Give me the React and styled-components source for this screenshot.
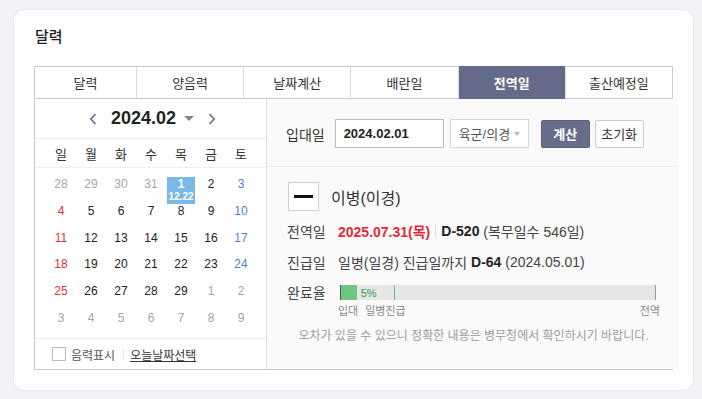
import styled, {createGlobalStyle} from 'styled-components'

const GlobalStyle = createGlobalStyle`
    body {
        margin: 0;
        background: #f2f3f7;
        font-family: "Liberation Sans", "Noto Sans CJK KR", sans-serif;
        color: #333;
    }
`;

const tabs = ["달력", "양음력", "날짜계산", "배란일", "전역일", "출산예정일"];
const weekdays = ["일", "월", "화", "수", "목", "금", "토"];

// kind: prev / next month are muted, sun / sat coloured
const buildDays = () => {
    const days = [];
    [28, 29, 30, 31].forEach(d => days.push({d, muted: true}));
    for (let d = 1; d <= 29; d++) days.push({d});
    for (let d = 1; d <= 9; d++) days.push({d, muted: true});
    return days.map((day, i) => ({...day, col: i % 7}));
};

export default function App() {
    const days = buildDays();
    const progress = 5;
    const promoteAt = 16.8;

    return (
        <Page>
            <GlobalStyle/>
            <Card>
                <Title>달력</Title>
                <TabBar>
                    {tabs.map(t => <Tab key={t} $active={t === "전역일"}>{t}</Tab>)}
                </TabBar>
                <Body>
                    <Calendar>
                        <MonthHeader>
                            <Arrow viewBox="0 0 8 12"><path d="M6.5 1 L1.8 6 L6.5 11"/></Arrow>
                            <MonthLabel>2024.02</MonthLabel>
                            <Caret/>
                            <Arrow viewBox="0 0 8 12"><path d="M1.5 1 L6.2 6 L1.5 11"/></Arrow>
                        </MonthHeader>
                        <WeekRow>
                            {weekdays.map(w => <WeekDay key={w}>{w}</WeekDay>)}
                        </WeekRow>
                        <DayGrid>
                            {days.map((day, i) => {
                                const selected = !day.muted && day.d === 1;
                                return (
                                    <DayCell key={i} $muted={day.muted} $col={day.col} $selected={selected}>
                                        <span>{day.d}</span>
                                        {selected && <Lunar>12.22</Lunar>}
                                    </DayCell>
                                );
                            })}
                        </DayGrid>
                        <CalFooter>
                            <CheckBox/>
                            <FootText>음력표시</FootText>
                            <FootSep/>
                            <TodayLink>오늘날짜선택</TodayLink>
                        </CalFooter>
                    </Calendar>

                    <Panel>
                        <FormRow>
                            <FieldLabel>입대일</FieldLabel>
                            <DateInput value="2024.02.01" readOnly/>
                            <SelectBox>육군/의경<SmallCaret/></SelectBox>
                            <CalcButton>계산</CalcButton>
                            <ResetButton>초기화</ResetButton>
                        </FormRow>
                        <Info>
                            <RankRow>
                                <Insignia><i/></Insignia>
                                <RankName>이병(이경)</RankName>
                            </RankRow>
                            <InfoRow>
                                <RowLabel>전역일</RowLabel>
                                <RedDate>2025.07.31(목)</RedDate>
                                <Pipe/>
                                <b>D-520</b>&nbsp;(복무일수 546일)
                            </InfoRow>
                            <InfoRow>
                                <RowLabel>진급일</RowLabel>
                                일병(일경) 진급일까지&nbsp;<b>D-64</b>&nbsp;(2024.05.01)
                            </InfoRow>
                            <ProgressRow>
                                <RowLabel>완료율</RowLabel>
                                <ProgressWrap>
                                    <Bar>
                                        <Fill style={{width: `${progress}%`}}/>
                                        <Percent>{progress}%</Percent>
                                        <Marker style={{left: `${promoteAt}%`}}/>
                                    </Bar>
                                    <Rail>
                                        <span>입대</span>
                                        <span>일병진급</span>
                                        <RailEnd>전역</RailEnd>
                                    </Rail>
                                </ProgressWrap>
                            </ProgressRow>
                            <Note>오차가 있을 수 있으니 정확한 내용은 병무청에서 확인하시기 바랍니다.</Note>
                        </Info>
                    </Panel>
                </Body>
            </Card>
        </Page>
    );
}

const Page = styled.div`
    padding: 10px 9px 9px 14px;
`;

const Card = styled.div`
    background: #fff;
    border-radius: 10px;
    box-shadow: 0 0 0 1px #e7e8ed;
    padding: 17px 20px 20px;
`;

const Title = styled.h1`
    margin: 0 0 19px 1px;
    font-size: 15px;
    line-height: 20px;
    font-weight: 500;
    color: #222;
`;

const TabBar = styled.div`
    display: grid;
    grid-template-columns: 101px repeat(5, minmax(0, 1fr));
    height: 33px;
    box-sizing: border-box;
    border: 1px solid #ccc;
`;

const Tab = styled.div`
    display: flex;
    align-items: center;
    justify-content: center;
    font-size: 13px;
    color: ${p => p.$active ? '#fff' : '#333'};
    font-weight: ${p => p.$active ? 700 : 400};
    background: ${p => p.$active ? '#646b88' : '#fff'};
    border-left: 1px solid #ddd;
    margin-top: ${p => p.$active ? '-1px' : 0};
    margin-bottom: ${p => p.$active ? '-1px' : 0};
    &:first-child { border-left: none; }
`;

const Body = styled.div`
    display: flex;
    height: 271px;
    box-sizing: border-box;
    border: 1px solid #ccc;
    border-top: none;
`;

const Calendar = styled.div`
    width: 231px;
    flex-shrink: 0;
    display: flex;
    flex-direction: column;
    background: #fff;
    border-right: 1px solid #ddd;
`;

const MonthHeader = styled.div`
    height: 39px;
    border-bottom: 1px solid #eee;
    display: flex;
    align-items: center;
    justify-content: center;
    padding-left: 4px;
`;

const Arrow = styled.svg`
    width: 8px;
    height: 12px;
    margin: 0 14px;
    fill: none;
    stroke: #6e7591;
    stroke-width: 1.8;
`;

const MonthLabel = styled.span`
    font-size: 18px;
    font-weight: 700;
    color: #222;
`;

const Caret = styled.span`
    width: 0;
    height: 0;
    margin-left: 8px;
    border-left: 5px solid transparent;
    border-right: 5px solid transparent;
    border-top: 5px solid #888;
`;

const WeekRow = styled.div`
    height: 28px;
    border-bottom: 1px solid #eee;
    display: grid;
    grid-template-columns: repeat(7, 30px);
    padding: 0 10px 0 11px;
    align-items: center;
`;

const WeekDay = styled.span`
    text-align: center;
    font-size: 13px;
    color: #333;
`;

const dayColor = p => {
    if (p.$selected) return '#fff';
    if (p.$muted) return '#a5a5a5';
    if (p.$col === 0) return '#e0313f';
    if (p.$col === 6) return '#4d7fd8';
    return '#222';
};

const DayGrid = styled.div`
    display: grid;
    grid-template-columns: repeat(7, 30px);
    grid-auto-rows: 26.8px;
    padding: 9px 10px 0 11px;
    height: 161px;
`;

const DayCell = styled.div`
    display: flex;
    flex-direction: column;
    align-items: center;
    margin: 0 1px;
    font-size: 12px;
    line-height: 14px;
    color: ${dayColor};
    font-weight: ${p => p.$selected ? 700 : 400};
    background: ${p => p.$selected ? '#7ab8e6' : 'transparent'};
`;

const Lunar = styled.span`
    font-size: 10px;
    line-height: 12px;
    font-weight: 700;
`;

const CalFooter = styled.div`
    margin-top: auto;
    height: 30px;
    border-top: 1px solid #eee;
    display: flex;
    align-items: center;
    padding-left: 17px;
`;

const CheckBox = styled.span`
    width: 12px;
    height: 12px;
    border: 1px solid #bbb;
    background: #fff;
`;

const FootText = styled.span`
    margin-left: 5px;
    font-size: 12px;
    color: #555;
`;

const FootSep = styled.span`
    width: 1px;
    height: 10px;
    margin: 0 6px 0 8px;
    background: #e3e3e3;
`;

const TodayLink = styled.span`
    font-size: 12px;
    color: #333;
    text-decoration: underline;
`;

const Panel = styled.div`
    flex: 1;
    background: #fafafa;
    display: flex;
    flex-direction: column;
`;

const FormRow = styled.div`
    display: flex;
    align-items: center;
    padding: 20px 0 18px 19px;
    border-bottom: 1px solid #ededed;
`;

const FieldLabel = styled.span`
    font-size: 14px;
    color: #333;
    margin-right: 10px;
`;

const DateInput = styled.input`
    width: 109px;
    height: 29px;
    box-sizing: border-box;
    border: 1px solid #bdbdbd;
    padding: 0 8px;
    font-family: "Liberation Sans", sans-serif;
    font-size: 13px;
    font-weight: 700;
    color: #222;
    background: #fff;
    outline: none;
`;

const SelectBox = styled.div`
    width: 79px;
    height: 29px;
    box-sizing: border-box;
    margin-left: 6px;
    border: 1px solid #d6d6d6;
    background: #fff;
    display: flex;
    align-items: center;
    padding-left: 8px;
    font-size: 13px;
    color: #555;
`;

const SmallCaret = styled.span`
    width: 0;
    height: 0;
    margin-left: 4px;
    border-left: 3.5px solid transparent;
    border-right: 3.5px solid transparent;
    border-top: 4px solid #bbb;
`;

const CalcButton = styled.div`
    width: 49px;
    height: 28px;
    box-sizing: border-box;
    margin-left: 12px;
    border: 1px solid #5a6180;
    border-radius: 2px;
    background: #676e8c;
    color: #fff;
    font-size: 13px;
    font-weight: 700;
    display: flex;
    align-items: center;
    justify-content: center;
`;

const ResetButton = styled.div`
    width: 49px;
    height: 28px;
    box-sizing: border-box;
    margin-left: 5px;
    border: 1px solid #ccc;
    border-radius: 2px;
    background: #fff;
    color: #333;
    font-size: 13px;
    display: flex;
    align-items: center;
    justify-content: center;
`;

const Info = styled.div`
    padding: 15px 18px 0 20px;
    display: flex;
    flex-direction: column;
`;

const RankRow = styled.div`
    display: flex;
    align-items: center;
    margin-left: 1px;
`;

const Insignia = styled.div`
    width: 31px;
    height: 29px;
    box-sizing: border-box;
    border: 1px solid #cfcfcf;
    background: #fff;
    display: flex;
    align-items: center;
    justify-content: center;

    & i {
        width: 19px;
        height: 3px;
        background: #111;
    }
`;

const RankName = styled.span`
    margin-left: 12px;
    font-size: 16px;
    color: #333;
`;

const InfoRow = styled.div`
    display: flex;
    align-items: center;
    height: 20px;
    margin-top: 10px;
    font-size: 14px;
    color: #444;
    white-space: nowrap;

    & + & { margin-top: 11px; }

    & b {
        color: #222;
    }
`;

const RowLabel = styled.span`
    width: 51px;
    flex-shrink: 0;
    font-size: 14px;
    color: #444;
`;

const RedDate = styled.span`
    color: #e02a3a;
    font-weight: 700;
`;

const Pipe = styled.span`
    width: 1px;
    height: 14px;
    margin: 0 5px;
    background: #ddd;
`;

const ProgressRow = styled.div`
    display: flex;
    align-items: flex-start;
    margin-top: 13px;

    & > span {
        line-height: 16px;
    }
`;

const ProgressWrap = styled.div`
    width: 322px;
    display: flex;
    flex-direction: column;
`;

const Bar = styled.div`
    position: relative;
    height: 15px;
    margin: 0 4px 0 2px;
    background: #e6e6e6;
    border-left: 1px solid #555;
    border-right: 1px solid #999;
    display: flex;
    align-items: center;
`;

const Fill = styled.div`
    height: 100%;
    background: #6cc783;
`;

const Percent = styled.span`
    margin-left: 4px;
    font-size: 11px;
    color: #2f9e57;
`;

const Marker = styled.span`
    position: absolute;
    top: 0;
    bottom: 0;
    width: 1px;
    background: #5bc47a;
`;

const Rail = styled.div`
    display: flex;
    margin-top: 4px;
    font-size: 11px;
    line-height: 14px;
    color: #888;

    & span + span { margin-left: 7px; }
`;

const RailEnd = styled.span`
    margin-left: auto !important;
`;

const Note = styled.p`
    margin: 10px 0 0;
    text-align: center;
    font-size: 12px;
    line-height: 16px;
    color: #9a9a9a;
`;
